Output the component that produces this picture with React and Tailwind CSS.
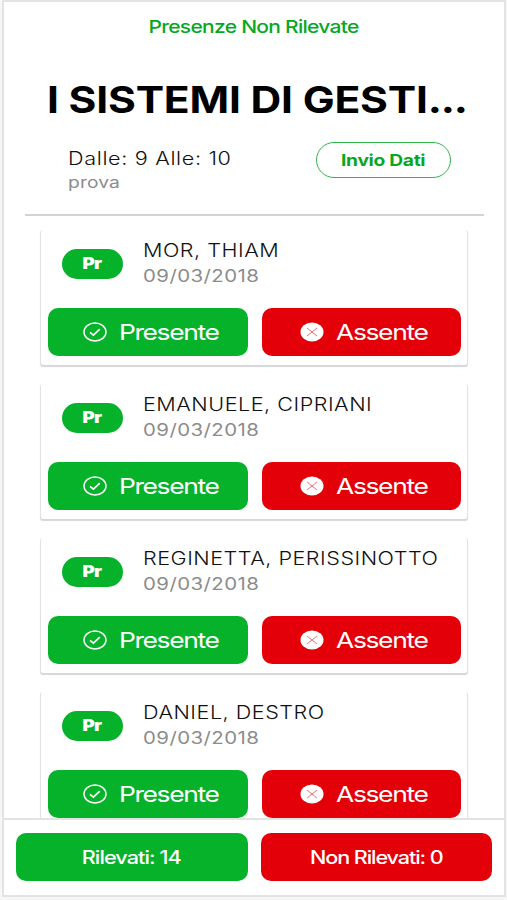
const students = [
  { name: "MOR, THIAM", date: "09/03/2018" },
  { name: "EMANUELE, CIPRIANI", date: "09/03/2018" },
  { name: "REGINETTA, PERISSINOTTO", date: "09/03/2018" },
  { name: "DANIEL, DESTRO", date: "09/03/2018" },
];

function CheckIcon() {
  return (
    <svg width="24" height="20" viewBox="0 0 24 20" fill="none" stroke="#fff">
      <ellipse cx="12" cy="10" rx="11" ry="9" strokeWidth="1.4" />
      <path d="M7 10.4l3.4 2.7 6.4-6" strokeWidth="1.7" />
    </svg>
  );
}

function CloseIcon() {
  return (
    <svg width="24" height="20" viewBox="0 0 24 20" fill="none">
      <ellipse cx="12" cy="10" rx="11.5" ry="9.5" fill="#fff" />
      <path d="M7 6l10 8M17 6L7 14" stroke="#ee7078" strokeWidth="1" />
    </svg>
  );
}

function StudentCard({ student }) {
  return (
    <div className="h-[135px] shrink-0 rounded-[3px] border-x border-[#e2e2e2] bg-white px-[6.5px] shadow-[0_2px_1px_#d6d6d6]">
      <div className="flex h-[78px] items-start pl-[14px]">
        <div className="mt-[19px] flex h-[30px] w-[61px] items-center justify-center rounded-full bg-[#07b22b] text-[15.5px] font-black text-white">
          <span className="scale-x-[1.2] tracking-[-0.6px]">Pr</span>
        </div>
        <div className="ml-[20px] mt-[8px] whitespace-nowrap">
          <p className="w-fit origin-left scale-x-[1.2] text-[18px] font-light leading-[25px] tracking-[0.42px] text-[#111]">{student.name}</p>
          <p className="w-fit origin-left scale-x-[1.2] text-[17px] leading-[26px] tracking-[0.36px] text-[#8c8c8c]">{student.date}</p>
        </div>
      </div>
      <div className="flex gap-[13.5px] text-[22px] text-white">
        <button className="flex h-12 w-[200.5px] items-center rounded-[10px] bg-[#07b22b] pl-[35px]">
          <CheckIcon />
          <span className="ml-[12px] origin-left scale-x-[1.2] tracking-[-1.15px]">Presente</span>
        </button>
        <button className="flex h-12 w-[199px] items-center rounded-[10px] bg-[#e30008] pl-[38px]">
          <CloseIcon />
          <span className="ml-[12px] origin-left scale-x-[1.2] tracking-[-1.1px]">Assente</span>
        </button>
      </div>
    </div>
  );
}

export default function App() {
  return (
    <div className="h-[900px] w-[507px] overflow-hidden bg-[#f7f7f7] pl-[2px] pr-[1px] font-['Inter',sans-serif]">
      <div className="flex h-[897px] flex-col border-2 border-[#e3e3e3] bg-white">
        <header className="flex h-[50px] justify-center pt-[12px]">
          <span className="h-[26px] scale-x-[1.2] text-[17.5px] font-medium leading-[26px] tracking-[-0.6px] text-[#07a81f]">Presenze Non Rilevate</span>
        </header>

        <main className="min-h-0 flex-1 overflow-hidden">
          <h1 className="ml-[43px] mt-[24px] w-fit origin-left scale-x-[1.15] whitespace-nowrap text-[37px] font-bold leading-[47px] tracking-[-0.18px] text-black">
            I SISTEMI DI GESTI<span className="tracking-[-1px]">...</span>
          </h1>
          <div className="ml-[64px] mr-[53px] mt-[17px] flex justify-between">
            <div className="mt-[7px]">
              <p className="w-fit origin-left scale-x-[1.2] text-[18px] font-light leading-[24px] tracking-[0.55px] text-[#111]">Dalle: 9 Alle: 10</p>
              <p className="w-fit origin-left scale-x-[1.2] text-[16px] leading-[22px] tracking-[0.1px] text-[#8c8c8c]">prova</p>
            </div>
            <button className="mt-[2px] flex h-9 w-[135px] items-center justify-center rounded-full border border-[#2eb548] text-[16px] font-bold text-[#07a81f]">
              <span className="scale-x-[1.2] whitespace-nowrap tracking-[-0.25px]">Invio Dati</span>
            </button>
          </div>
          <hr className="ml-[21px] mr-[20px] mt-[21px] border-t-2 border-[#d3d3d3]" />
          <div className="ml-[36px] mr-[36px] mt-[14px] flex flex-col gap-[19px]">
            {students.map((s) => (
              <StudentCard key={s.name} student={s} />
            ))}
          </div>
        </main>

        <footer className="flex h-[77px] shrink-0 gap-[13px] border-t-2 border-[#e3e3e3] pl-[11.5px] pt-[13px] text-[18px] font-medium text-white">
          <button className="flex h-12 w-[232.5px] items-center justify-center rounded-[10px] bg-[#07b22b]">
            <span className="scale-x-[1.2] tracking-[-0.75px]">Rilevati: 14</span>
          </button>
          <button className="flex h-12 w-[231px] items-center justify-center rounded-[10px] bg-[#e30008]">
            <span className="scale-x-[1.2] tracking-[-0.9px]">Non Rilevati: 0</span>
          </button>
        </footer>
      </div>
    </div>
  );
}
